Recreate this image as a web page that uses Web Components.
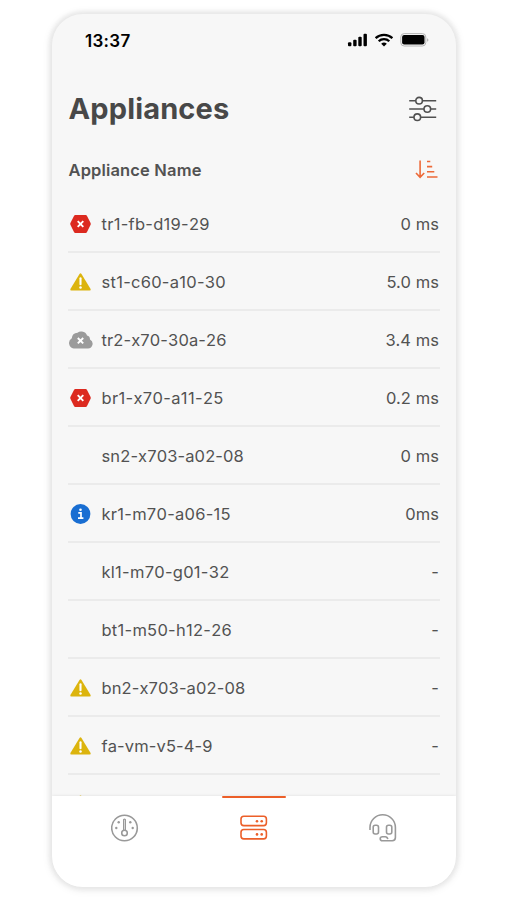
<!DOCTYPE html>
<html lang="en">
<head>
<meta charset="utf-8">
<title>Appliances</title>
<style>
html,body{margin:0;background:#fff}
body{width:507px;height:900px;overflow:hidden;font-family:Inter,"Liberation Sans",sans-serif;color:#525252}
</style>
</head>
<body>
<phone-frame>
  <status-bar slot="top" time="13:37"></status-bar>
  <page-header slot="top">Appliances</page-header>
  <list-header slot="top">Appliance Name</list-header>
  <appliance-row status="error" value="0 ms">tr1-fb-d19-29</appliance-row>
  <appliance-row status="warning" value="5.0 ms">st1-c60-a10-30</appliance-row>
  <appliance-row status="cloud" value="3.4 ms">tr2-x70-30a-26</appliance-row>
  <appliance-row status="error" value="0.2 ms">br1-x70-a11-25</appliance-row>
  <appliance-row value="0 ms">sn2-x703-a02-08</appliance-row>
  <appliance-row status="info" value="0ms">kr1-m70-a06-15</appliance-row>
  <appliance-row value="-">kl1-m70-g01-32</appliance-row>
  <appliance-row value="-">bt1-m50-h12-26</appliance-row>
  <appliance-row status="warning" value="-">bn2-x703-a02-08</appliance-row>
  <appliance-row status="warning" value="-">fa-vm-v5-4-9</appliance-row>
  <appliance-row status="warning"></appliance-row>
  <tab-bar slot="bottom"></tab-bar>
</phone-frame>
<script>
const define = (name, render) => customElements.define(name, class extends HTMLElement {
  connectedCallback() {
    if (!this.shadowRoot) this.attachShadow({ mode: 'open' }).innerHTML = render(this);
  }
});

define('phone-frame', () => `
<style>
:host{display:flex;flex-direction:column;box-sizing:border-box;width:404px;height:873px;margin:14px 0 0 52px;border-radius:31px;background:#f7f7f7;overflow:hidden;box-shadow:0 0 4px 2px #e6e6e6,0 1px 9px 2px rgba(0,0,0,.08)}
.list{flex:1;min-height:0;overflow:hidden;padding:0 16px}
</style>
<slot name="top"></slot>
<div class="list"><slot></slot></div>
<slot name="bottom"></slot>`);

define('status-bar', el => `
<style>
:host{display:flex;justify-content:space-between;align-items:center;height:52px;padding:0 27px 0 33px;color:#000;font-size:17px;font-weight:600;letter-spacing:.3px}
span{padding-top:2px}
svg{display:block}
</style>
<span>${el.getAttribute('time')}</span>
<svg width="82" height="16" viewBox="0 0 82 16">
  <g fill="#000"><rect x="1" y="10.3" width="3.4" height="4" rx="1"/><rect x="6.2" y="7.700" width="3.4" height="6.6" rx="1"/><rect x="11.3" y="4.800" width="3.4" height="9.5" rx="1"/><rect x="16.5" y="1.700" width="3.4" height="12.6" rx="1"/></g>
  <g fill="none" stroke="#000" stroke-width="2.3"><path d="M28.600 6.200a12.100 12.100 0 0 1 16.800 0"/><path d="M31.700 9.300a7.600 7.600 0 0 1 10.600 0"/></g>
  <path d="M34.200 11.800a4 4 0 0 1 5.600 0L37 14.500z"/>
  <rect x="53.800" y="1.600" width="25" height="12.400" rx="3.400" fill="none" stroke="#b4b4b4"/>
  <rect x="55.100" y="3" width="22.400" height="9.600" rx="2"/><path d="M80.200 6.200q2.400 1.700 0 3.600z" fill="#aaa"/>
</svg>`);

define('page-header', () => `
<style>
:host{display:flex;justify-content:space-between;align-items:center;height:84px;padding:0 19px 0 16.500px;color:#484848;font-size:29px;font-weight:700;letter-spacing:.15px}
svg{display:block;margin-top:2px}
</style>
<span><slot></slot></span>
<svg width="28" height="26" viewBox="0 0 28 26" fill="none" stroke="#505050" stroke-width="1.6">
<path d="M.2 4.700h6.600m6.600 0h13.800M.2 13h14.800m6.600 0h5.600M.2 21.200h4.800m6.600 0h15.600"/>
<circle cx="10.100" cy="4.700" r="3.300"/><circle cx="18.300" cy="13" r="3.300"/><circle cx="8.300" cy="21.200" r="3.300"/></svg>`);

define('list-header', () => `
<style>
:host{display:flex;justify-content:space-between;align-items:center;height:39px;padding:0 18px 6px 16.500px;color:#525252;font-size:16.500px;font-weight:600;letter-spacing:.15px}
svg{display:block}
</style>
<span><slot></slot></span>
<svg width="23" height="19" viewBox="0 0 23 19" fill="none" stroke="#ed6a39" stroke-width="1.600">
<path d="M5.100 .5v16.600M1 13l4.100 4.300L9.200 13M12 1.500h3.300M12 6.600h5.200M12 11.800h7.300M12 17h10.500"/></svg>`);

const statusIcons = {
  error: '<path d="M7.300 1h10.400q.8 0 1.200.7l3.700 7.400q.4.9 0 1.700l-3.700 7.400q-.4.8-1.200.8H7.300q-.8 0-1.200-.8l-3.700-7.400q-.4-.9 0-1.700l3.700-7.400Q6.500 1 7.300 1z" fill="#dc2a20"/><path d="M9.700 7.200l5.600 5.600m0-5.600l-5.600 5.600" stroke="#fff" stroke-width="1.900"/>',
  warning: '<path d="M11.500 2q1-1.500 2 0l9.100 14.900q.6 1.600-1 1.600H3.400q-1.600 0-1-1.600z" fill="#dcb40d"/><path d="M12.500 6.300v6" stroke="#fff" stroke-width="2.100" stroke-linecap="round"/><circle cx="12.500" cy="15.500" r="1.250" fill="#fff"/>',
  cloud: '<path d="M5.700 18.400A5.500 5.500 0 0 1 3.800 8.200A6 6 0 0 1 9.500 2.700Q11.500 1 14 1.500Q18 2 19 5.400Q22 6 22 9.500A4.700 4.700 0 0 1 20 18.400z" fill="#9b9b9b"/><path d="M9.800 8l5.400 5.400m0-5.400l-5.400 5.400" stroke="#fff" stroke-width="1.900"/>',
  info: '<circle cx="12.500" cy="10" r="9.900" fill="#196ed2"/><path d="M10.300 8.800h2.700v5M10 14.200h5.400" fill="none" stroke="#fff" stroke-width="1.700"/><circle cx="12.500" cy="5.800" r="1.300" fill="#fff"/>'
};

// Names with narrow "1" digits get slightly wider tracking.
const tracking = name => (0.12 + (name.split('1').length - 1) * 1.05 / Math.max(name.length, 1)).toFixed(3);

define('appliance-row', el => `
<style>
:host{display:flex;align-items:center;box-sizing:border-box;height:58px;padding:2px 1px 0 0;border-bottom:2px solid #ebebeb;font-size:16.500px;letter-spacing:.07px}
svg{display:block;width:25px;height:20px;margin-right:8.500px}
.name{flex:1;font-kerning:none;letter-spacing:${tracking(el.textContent)}px}
</style>
<svg viewBox="0 0 25 20">${statusIcons[el.getAttribute('status')] || ''}</svg>
<span class="name"><slot></slot></span>
<span>${el.getAttribute('value') || ''}</span>`);

define('tab-bar', () => `
<style>
:host{display:grid;grid-template-columns:repeat(3,1fr);padding:0 8px;height:91px;background:#fff;box-shadow:0 0 3px #dedede;position:relative}
.tab{display:flex;flex-direction:column;align-items:center;color:#999}
.tab::before{content:"";width:64px;height:2px;margin-bottom:16px;border-radius:1px}
.active{color:#ec5f29}
.active::before{background:#ec5f29}
svg{display:block;fill:none;stroke:currentColor;stroke-width:1.600}
.dots{fill:currentColor;stroke:none}
</style>
<div class="tab"><svg width="28" height="28" viewBox="0 0 28 28"><circle cx="13.500" cy="14" r="12.800"/><path d="M12.600 16.200V5.700q.9-1 1.800 0v10.500" stroke-width="1.200"/><circle cx="13.500" cy="19" r="2.800"/><g class="dots"><circle cx="7.700" cy="8.200" r="1.200"/><circle cx="19.300" cy="8.200" r="1.200"/><circle cx="5.300" cy="14" r="1.200"/><circle cx="21.700" cy="14" r="1.200"/></g></svg></div>
<div class="tab active"><svg width="28" height="28" viewBox="0 0 28 28"><rect x="1" y="2.200" width="25.400" height="9.400" rx="2.800"/><rect x="1" y="15.500" width="25.400" height="9.400" rx="2.800"/><g class="dots"><circle cx="17" cy="7.200" r="1.300"/><circle cx="21.700" cy="7.200" r="1.300"/><circle cx="17" cy="20.400" r="1.300"/><circle cx="21.700" cy="20.400" r="1.300"/></g></svg></div>
<div class="tab"><svg width="28" height="28" viewBox="0 0 28 28"><path d="M1 16v-2.500a12.700 12.700 0 0 1 25.400 0v10q0 3.200-3.200 3.200H13.500q-2.300 0-2.300-2t2.300-2h2.800q2 0 2.500 2.400"/><rect x="4.200" y="11.300" width="5.300" height="8.700" rx="2"/><rect x="17.500" y="11.300" width="5.300" height="8.700" rx="2"/></svg></div>`);
</script>
</body>
</html>
